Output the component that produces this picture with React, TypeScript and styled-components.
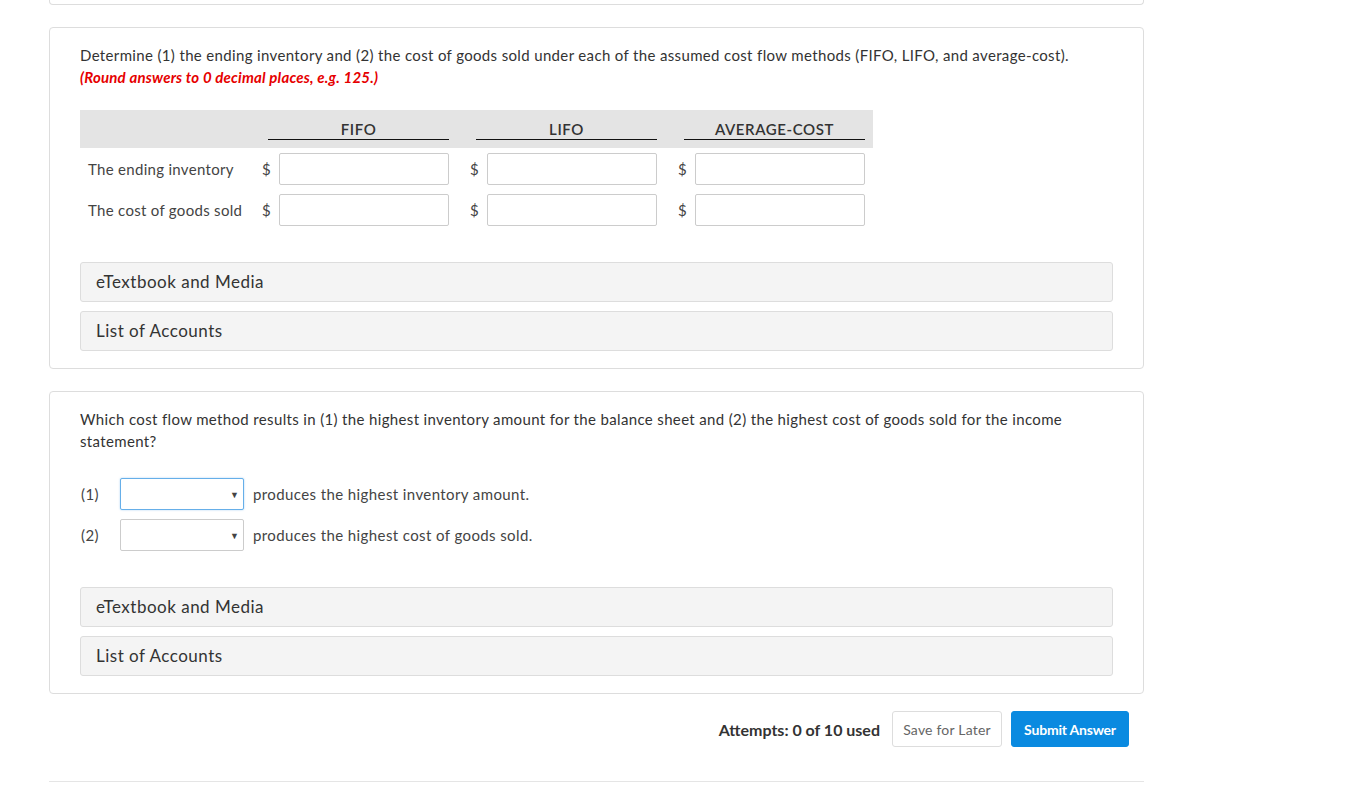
import React from "react";
import styled, { createGlobalStyle } from "styled-components";

const Global = createGlobalStyle`
  html, body { margin: 0; padding: 0; background: #fff; }
  body { font-family: Lato, "Open Sans", Arial, sans-serif; color: #333; }
  * { box-sizing: border-box; }
`;

const Page = styled.div`
  width: 1095px;
  margin-left: 49px;
  display: flex;
  flex-direction: column;
`;

const TopCardEdge = styled.div`
  height: 5px;
  border: 1px solid #ddd;
  border-top: none;
  border-radius: 0 0 4px 4px;
  margin-bottom: 22px;
`;

const Card = styled.section`
  border: 1px solid #ddd;
  border-radius: 4px;
  padding: 16px 30px 17px 30px;
  margin-bottom: 22px;
`;

const Prompt = styled.p`
  margin: 0;
  font-size: 15px;
  line-height: 22px;
  letter-spacing: 0.35px;
  color: #333;
`;

const Hint = styled.span`
  display: block;
  color: #e60000;
  font-weight: 700;
  font-style: italic;
  letter-spacing: 0.2px;
`;

const Grid = styled.div`
  margin-top: 22px;
  width: 793px;
  display: grid;
  grid-template-columns: 182px 17px 170px 38px 170px 38px 170px 8px;
  row-gap: 9px;
`;

const HeaderRow = styled.div`
  grid-column: 1 / -1;
  display: grid;
  grid-template-columns: subgrid;
  background: #e4e4e4;
  height: 38px;
  padding-top: 9px;
  margin-bottom: -4px;
`;

const HeaderCell = styled.div<{ $col: string; $offset: number }>`
  grid-column: ${(p) => p.$col};
  margin-left: ${(p) => p.$offset}px;
  border-bottom: 1px solid #111;
  height: 21px;
  text-align: center;
  font-size: 15px;
  line-height: 20px;
  font-weight: 600;
  letter-spacing: 0.6px;
  color: #333;
`;

const RowLabel = styled.div`
  padding-left: 8px;
  font-size: 15px;
  line-height: 32px;
  letter-spacing: 0.3px;
  color: #444;
  white-space: nowrap;
`;

const Dollar = styled.div<{ $pad: number }>`
  padding-left: ${(p) => p.$pad}px;
  font-size: 15px;
  line-height: 32px;
  color: #444;
`;

const Field = styled.input`
  width: 170px;
  height: 32px;
  border: 1px solid #ccc;
  border-radius: 2px;
  background: #fff;
  font: inherit;
  padding: 0 8px;
  outline: none;
`;

const Accordions = styled.div<{ $top: number }>`
  margin-top: ${(p) => p.$top}px;
  display: flex;
  flex-direction: column;
  gap: 9px;
`;

const Accordion = styled.div`
  height: 40px;
  background: #f4f4f4;
  border: 1px solid #ddd;
  border-radius: 3px;
  padding-left: 15px;
  font-size: 17px;
  line-height: 38px;
  letter-spacing: 0.5px;
  color: #333;
`;

const SelectList = styled.div`
  margin-top: 26px;
  display: flex;
  flex-direction: column;
  gap: 9px;
`;

const SelectRow = styled.div`
  display: flex;
  align-items: center;
  height: 32px;
`;

const Num = styled.span`
  width: 40px;
  padding-left: 1px;
  font-size: 15px;
  letter-spacing: 0.4px;
  color: #444;
`;

const Select = styled.div<{ $focus?: boolean }>`
  width: 124px;
  height: 32px;
  border: 1px solid ${(p) => (p.$focus ? "#66afe9" : "#ccc")};
  border-radius: 2px;
  box-shadow: ${(p) => (p.$focus ? "0 0 2px rgba(102,175,233,0.6)" : "none")};
  background: #fff;
  display: flex;
  align-items: center;
  justify-content: flex-end;
  padding-right: 4px;
  font-size: 9px;
  color: #444;
`;

const After = styled.span`
  margin-left: 9px;
  font-size: 15px;
  letter-spacing: 0.4px;
  color: #444;
`;

const Footer = styled.div`
  margin-top: -5px;
  display: flex;
  justify-content: flex-end;
  align-items: center;
  padding-right: 15px;
  height: 36px;
`;

const Attempts = styled.span`
  font-size: 16px;
  font-weight: 700;
  color: #333;
  margin-right: 12px;
`;

const Btn = styled.button<{ $primary?: boolean; $w: number }>`
  width: ${(p) => p.$w}px;
  height: 36px;
  border-radius: 3px;
  border: 1px solid ${(p) => (p.$primary ? "#0a8ae0" : "#ddd")};
  background: ${(p) => (p.$primary ? "#0a8ae0" : "#fff")};
  color: ${(p) => (p.$primary ? "#fff" : "#666")};
  font-family: Lato, Arial, sans-serif;
  font-size: 14px;
  font-weight: ${(p) => (p.$primary ? 700 : 400)};
  margin-left: ${(p) => (p.$primary ? 9 : 0)}px;
  padding: 0;
  letter-spacing: ${(p) => (p.$primary ? -0.2 : 0.2)}px;
`;

const Rule = styled.hr`
  margin: 34px 0 0 0;
  border: none;
  border-top: 1px solid #e5e5e5;
`;

const rows = ["The ending inventory", "The cost of goods sold"];

export default function App() {
  return (
    <>
      <Global />
      <Page>
        <TopCardEdge />
        <Card>
          <Prompt>
            Determine (1) the ending inventory and (2) the cost of goods sold under each of the assumed cost flow
            methods (FIFO, LIFO, and average-cost).
            <Hint>(Round answers to 0 decimal places, e.g. 125.)</Hint>
          </Prompt>
          <Grid>
            <HeaderRow>
              <HeaderCell $col="2 / 4" $offset={6}>FIFO</HeaderCell>
              <HeaderCell $col="4 / 6" $offset={27}>LIFO</HeaderCell>
              <HeaderCell $col="6 / 8" $offset={27}>AVERAGE-COST</HeaderCell>
            </HeaderRow>
            {rows.map((r) => (
              <React.Fragment key={r}>
                <RowLabel>{r}</RowLabel>
                <Dollar $pad={0}>$</Dollar>
                <Field aria-label={`${r} FIFO`} />
                <Dollar $pad={21}>$</Dollar>
                <Field aria-label={`${r} LIFO`} />
                <Dollar $pad={21}>$</Dollar>
                <Field aria-label={`${r} average-cost`} />
                <div />
              </React.Fragment>
            ))}
          </Grid>
          <Accordions $top={36}>
            <Accordion>eTextbook and Media</Accordion>
            <Accordion>List of Accounts</Accordion>
          </Accordions>
        </Card>

        <Card>
          <Prompt>
            Which cost flow method results in (1) the highest inventory amount for the balance sheet and (2) the
            highest cost of goods sold for the income statement?
          </Prompt>
          <SelectList>
            <SelectRow>
              <Num>(1)</Num>
              <Select $focus>▼</Select>
              <After>produces the highest inventory amount.</After>
            </SelectRow>
            <SelectRow>
              <Num>(2)</Num>
              <Select>▼</Select>
              <After>produces the highest cost of goods sold.</After>
            </SelectRow>
          </SelectList>
          <Accordions $top={36}>
            <Accordion>eTextbook and Media</Accordion>
            <Accordion>List of Accounts</Accordion>
          </Accordions>
        </Card>

        <Footer>
          <Attempts>Attempts: 0 of 10 used</Attempts>
          <Btn $w={110}>Save for Later</Btn>
          <Btn $w={118} $primary>Submit Answer</Btn>
        </Footer>
        <Rule />
      </Page>
    </>
  );
}
